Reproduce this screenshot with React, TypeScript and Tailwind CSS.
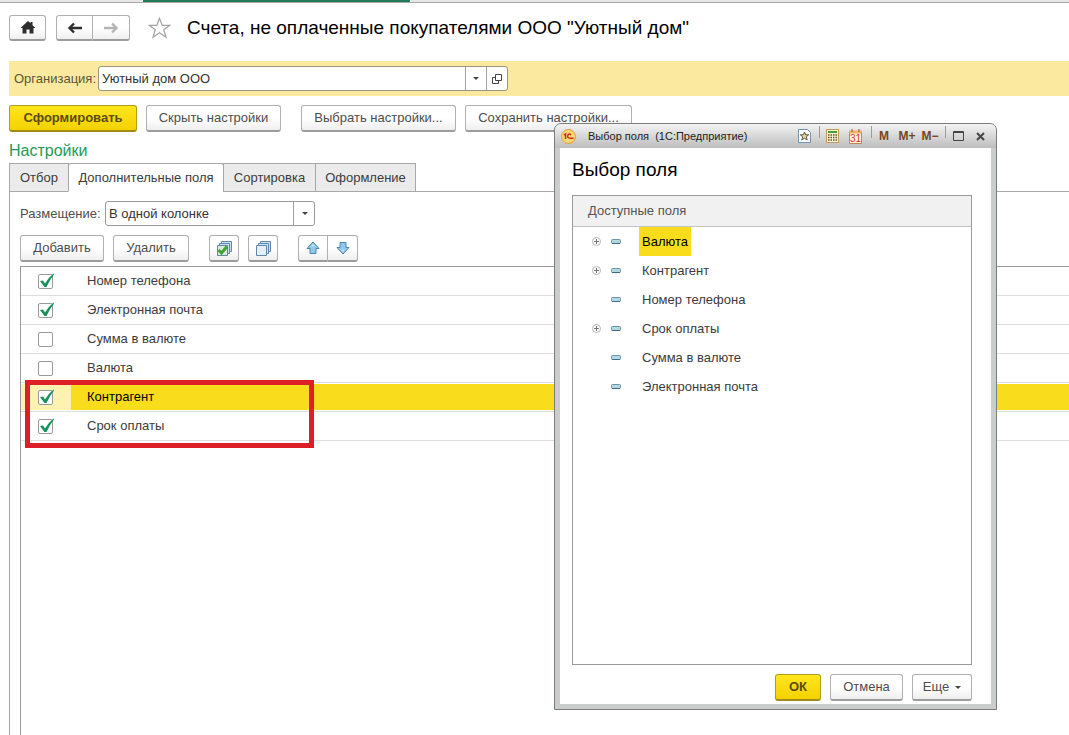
import { useState } from 'react';
import type { ReactNode } from 'react';

interface Field {
  id: string;
  title: string;
  checked: boolean;
}

interface TreeField {
  title: string;
  expandable: boolean;
}

const initialFields: Field[] = [
  { id: 'phone', title: 'Номер телефона', checked: true },
  { id: 'email', title: 'Электронная почта', checked: true },
  { id: 'sum', title: 'Сумма в валюте', checked: false },
  { id: 'currency', title: 'Валюта', checked: false },
  { id: 'contractor', title: 'Контрагент', checked: true },
  { id: 'due', title: 'Срок оплаты', checked: true },
];

const availableFields: TreeField[] = [
  { title: 'Валюта', expandable: true },
  { title: 'Контрагент', expandable: true },
  { title: 'Номер телефона', expandable: false },
  { title: 'Срок оплаты', expandable: true },
  { title: 'Сумма в валюте', expandable: false },
  { title: 'Электронная почта', expandable: false },
];

const tabs = [
  { title: 'Отбор', width: 'w-[60px]' },
  { title: 'Дополнительные поля', width: 'w-[156px]' },
  { title: 'Сортировка', width: 'w-[93px]' },
  { title: 'Оформление', width: 'w-[101px]' },
];

interface ButtonProps {
  children: ReactNode;
  className?: string;
  primary?: boolean;
  label?: string;
}

function Button({ children, className = '', primary = false, label }: ButtonProps) {
  const look = primary
    ? 'border-[#b39b1d] border-b-[#a08b18] bg-linear-to-b from-[#ffe61a] to-[#f3d200] font-bold text-[#5a4c0c]'
    : 'border-[#b0b0b0] border-b-[#9c9c9c] bg-linear-to-b from-white from-50% to-[#efefef] text-[#4d4d4d]';
  return (
    <button
      type="button"
      aria-label={label}
      className={`flex h-[27px] shrink-0 items-center justify-center rounded-[3px] border border-b-2 whitespace-nowrap ${look} ${className}`}
    >
      {children}
    </button>
  );
}

function Caret() {
  return (
    <svg width="6" height="3" viewBox="0 0 6 3" fill="#444" aria-hidden="true">
      <path d="M0 0h6L3 3z" />
    </svg>
  );
}

function ArrowIcon({ right = false }: { right?: boolean }) {
  return (
    <svg width="16" height="12" viewBox="0 0 16 12" fill="none" stroke={right ? '#b4b4b4' : '#2e2e2e'} strokeWidth="2.400" aria-hidden="true">
      {right ? <path d="M1 6h12M9 1.500l4.500 4.500L9 10.500" /> : <path d="M15 6H3M7 1.500L2.500 6L7 10.500" />}
    </svg>
  );
}

function SheetsIcon({ checked = false }: { checked?: boolean }) {
  return (
    <svg width="17" height="17" viewBox="0 0 17 17" aria-hidden="true">
      <g fill="#cfe0ee" stroke="#5f87ab">
        <path d="M5.500 1.500h10v10h-10z" />
        <path d="M3.500 3.500h10v10h-10z" />
        <path d="M1.500 5.500h10v10h-10z" fill={checked ? '#dcebdc' : '#e6eff8'} />
      </g>
      {checked && <path d="M2.500 10L5.500 13L11 6.500" fill="none" stroke="#3fa535" strokeWidth="3" />}
    </svg>
  );
}

function MoveIcon({ down = false }: { down?: boolean }) {
  return (
    <svg width="14" height="14" viewBox="0 0 14 14" className={down ? 'rotate-180' : ''} aria-hidden="true">
      <path d="M7 1L13 7.500H10V12.500H4V7.500H1z" fill="#8fc8e8" stroke="#4a87ae" strokeLinejoin="round" />
      <path d="M7 3L9 5.500H5z" fill="#c4e4f6" />
    </svg>
  );
}

function Header() {
  return (
    <header className="flex h-[26px] items-center pl-[9px]">
      <Button className="w-[37px] !h-[26px]" label="Начальная страница">
        <svg width="16" height="13" viewBox="0 0 16 13" fill="#2e2e2e" aria-hidden="true">
          <path d="M8 0L10.500 2.300V1H12.500V4.200L15.500 7H13.500V12.500H9.500V8.500H6.500V12.500H2.500V7H.5z" />
        </svg>
      </Button>
      <div className="ml-[10px] flex">
        <Button className="w-[37px] !h-[26px] rounded-r-none" label="Назад">
          <ArrowIcon />
        </Button>
        <Button className="w-[37px] !h-[26px] rounded-l-none border-l-0" label="Вперед">
          <ArrowIcon right />
        </Button>
      </div>
      <button type="button" aria-label="В избранное" className="ml-[18px]">
        <svg width="23" height="22" viewBox="0 0 23 22" fill="#fff" stroke="#a3a3a3" strokeWidth="1.200" aria-hidden="true">
          <path d="M11.500 1.200L14.200 8.300H21.800L15.700 12.800L18 20.200L11.500 15.700L5 20.200L7.300 12.800L1.200 8.300H8.800z" />
        </svg>
      </button>
      <h1 className="ml-4 text-[19px] whitespace-nowrap text-black">Счета, не оплаченные покупателями ООО "Уютный дом"</h1>
    </header>
  );
}

function OrganizationBar() {
  return (
    <div className="mt-5 ml-[9px] flex h-[35px] items-center bg-[#fbe9a0] pl-[5px]">
      <label htmlFor="organization" className="w-[84px] shrink-0 text-[#5e5535]">
        Организация:
      </label>
      <div className="flex h-[25px] w-[410px] rounded-[3px] border border-[#9c9680] bg-white">
        <input id="organization" type="text" defaultValue="Уютный дом ООО" className="min-w-0 flex-1 bg-transparent pl-[3px] text-[#333] outline-none" />
        <button type="button" aria-label="Выбрать из списка" className="flex w-[21px] items-center justify-center border-l border-[#a0a0a0]">
          <Caret />
        </button>
        <button type="button" aria-label="Открыть" className="flex w-[21px] items-center justify-center border-l border-[#a0a0a0]">
          <svg width="10" height="10" viewBox="0 0 10 10" fill="none" stroke="#444" aria-hidden="true">
            <path d="M3.500.5h6v6h-6zM3.500 3.500h-3v6h6v-3" />
          </svg>
        </button>
      </div>
    </div>
  );
}

function FieldsTable() {
  const [fields, setFields] = useState(initialFields);

  const toggle = (id: string) => {
    setFields(fields.map((f) => (f.id === id ? { ...f, checked: !f.checked } : f)));
  };

  return (
    <div className="relative mt-1 ml-[10px] flex-1 border-t border-l border-[#9a9a9a]">
      <table className="w-full border-collapse">
        <tbody>
          {fields.map((field) => {
            const selected = field.id === 'contractor';
            return (
              <tr key={field.id} className="border-b border-[#dedede]">
                <td className="w-[50px] p-0">
                  <div className={`my-px flex h-[26px] items-center pl-[17px] ${selected ? 'bg-[#fdf2b0]' : ''}`}>
                    <span className="relative block size-[15px]">
                      <input
                        id={field.id}
                        type="checkbox"
                        checked={field.checked}
                        onChange={() => toggle(field.id)}
                        className="block size-[15px] appearance-none rounded-[2px] border border-[#9a9a9a] bg-white"
                      />
                      {field.checked && (
                        <svg width="17" height="16" viewBox="0 0 17 16" className="pointer-events-none absolute -top-px left-0" aria-hidden="true">
                          <path d="M2 8L5 7.500L7 10.500Q10.500 4.500 15.500 .5L16 1.500Q11.500 7 8.500 14H6.500z" fill="#14935a" />
                        </svg>
                      )}
                    </span>
                  </div>
                </td>
                <td className="p-0">
                  <label
                    htmlFor={field.id}
                    className={`my-px flex h-[26px] items-center pl-4 ${selected ? 'bg-[#f9dc1c] text-black' : 'text-[#3c3c3c]'}`}
                  >
                    {field.title}
                  </label>
                </td>
              </tr>
            );
          })}
        </tbody>
      </table>
      {/* Highlight frame over the newly added fields */}
      <div className="pointer-events-none absolute top-[113px] left-1 h-[68px] w-[289px] border-[5px] border-[#dd2027]" />
    </div>
  );
}

function Settings() {
  const [active, setActive] = useState(1);
  return (
    <section className="ml-[9px] flex flex-1 flex-col">
      <h2 className="mt-[7px] text-base leading-6 text-[#1d9b56]">Настройки</h2>
      <div role="tablist" className="relative z-10 -mb-px flex">
        {tabs.map((tab, i) => (
          <button
            key={tab.title}
            type="button"
            role="tab"
            aria-selected={i === active}
            onClick={() => setActive(i)}
            className={`h-[29px] shrink-0 border border-[#a8a8a8] whitespace-nowrap text-[#3c3c3c] ${tab.width} ${i > 0 ? '-ml-px' : ''} ${
              i === active ? 'rounded-t-[3px] border-b-white bg-white' : 'bg-[#ebebeb]'
            }`}
          >
            {tab.title}
          </button>
        ))}
      </div>
      <div className="flex flex-1 flex-col border-t border-l border-[#a8a8a8]">
        <div className="mt-[9px] ml-[10px] flex h-[25px] items-center">
          <label htmlFor="placement" className="w-[85px] text-[#4d4d4d]">
            Размещение:
          </label>
          <div className="relative h-[25px] w-[210px]">
            <select id="placement" className="h-full w-full appearance-none rounded-[3px] border border-[#9a9a9a] bg-white pl-[3px] text-[#333]">
              <option>В одной колонке</option>
              <option>В разных колонках</option>
            </select>
            <span className="pointer-events-none absolute inset-y-0 right-0 flex w-[22px] items-center justify-center border-l border-[#a0a0a0]">
              <Caret />
            </span>
          </div>
        </div>
        <div className="mt-[9px] ml-[10px] flex">
          <Button className="w-[84px]">Добавить</Button>
          <Button className="ml-[9px] w-[76px]">Удалить</Button>
          <Button className="ml-5 w-[30px]" label="Включить все">
            <SheetsIcon checked />
          </Button>
          <Button className="ml-[9px] w-[30px]" label="Выключить все">
            <SheetsIcon />
          </Button>
          <Button className="ml-5 w-[30px] rounded-r-none" label="Вверх">
            <MoveIcon />
          </Button>
          <Button className="w-[30px] rounded-l-none border-l-0" label="Вниз">
            <MoveIcon down />
          </Button>
        </div>
        <FieldsTable />
      </div>
    </section>
  );
}

function TitleBar() {
  return (
    <div className="flex h-[24px] items-center bg-linear-to-b from-[#f4f4f4] via-[#d8d8d8] to-[#bdbdbd] pl-[6px] text-[11px]">
      <svg width="15" height="15" viewBox="0 0 15 15" aria-hidden="true">
        <circle cx="7.500" cy="7.500" r="7" fill="#fbd774" stroke="#e8973c" />
        <path d="M3 6L4.500 5V10M10 6Q9 4.800 7.800 5.200Q6.300 6 6.700 8Q7.300 9.500 12.500 9.300" fill="none" stroke="#d3281c" strokeWidth="1.500" />
      </svg>
      <span className="ml-3 flex-1 whitespace-pre text-[#222]">{'Выбор поля  (1С:Предприятие)'}</span>
      <div className="flex h-full items-center">
        <button type="button" aria-label="Добавить в избранное" className="mr-2">
          <svg width="13" height="14" viewBox="0 0 13 14" aria-hidden="true">
            <path d="M.5.5h9l3 3v10h-12z" fill="#fff" stroke="#7693ad" />
            <path d="M6.500 3L7.600 5.800H10.700L8.300 7.800L9.200 11L6.500 9.200L3.800 11L4.700 7.800L2.300 5.800H5.400z" fill="#e7d7a5" stroke="#5c5641" />
          </svg>
        </button>
        <span className="mb-2 h-3 w-px bg-[#9c9c9c]" />
        <button type="button" aria-label="Калькулятор" className="ml-[6px]">
          <svg width="13" height="14" viewBox="0 0 13 14" aria-hidden="true">
            <path d="M.5.5h12v13H.5z" fill="#fdf3cf" stroke="#c09a5a" />
            <path d="M2 2h9v2H2z" fill="#4d9a3e" />
            <path d="M2 6h9M2 8.500h9M2 11h9" stroke="#6c4c2c" strokeWidth="1.500" strokeDasharray="1.500 1" />
          </svg>
        </button>
        <button type="button" aria-label="Календарь" className="ml-[10px] mr-[9px]">
          <svg width="13" height="15" viewBox="0 0 13 15" aria-hidden="true">
            <path d="M.5 2.500h12v12H.5z" fill="#fff6e0" stroke="#c08746" />
            <path d="M.5 1.500h12v3H.5z" fill="#f2b164" />
            <path d="M3 0v3M10 0v3" stroke="#8f5a24" />
            <text x="6.500" y="13" textAnchor="middle" fontSize="10" fontFamily="Liberation Sans, sans-serif" fill="#d8341f">
              31
            </text>
          </svg>
        </button>
        <span className="mb-2 h-3 w-px bg-[#9c9c9c]" />
        <button type="button" className="ml-1 w-4 text-xs font-bold text-[#74481f]">
          M
        </button>
        <button type="button" className="ml-[5px] w-5 text-xs font-bold text-[#74481f]">
          M+
        </button>
        <button type="button" className="ml-[3px] w-5 text-xs font-bold text-[#74481f]">
          M−
        </button>
        <span className="mb-2 ml-[5px] h-3 w-px bg-[#9c9c9c]" />
        <button type="button" aria-label="Развернуть" className="ml-[7px]">
          <svg width="11" height="10" viewBox="0 0 11 10" fill="none" stroke="#444" aria-hidden="true">
            <path d="M.5.5h10v9H.5zM.5 1.500h10" />
          </svg>
        </button>
        <button type="button" aria-label="Закрыть" className="mr-[11px] ml-3">
          <svg width="9" height="9" viewBox="0 0 9 9" stroke="#444" strokeWidth="2" aria-hidden="true">
            <path d="M1 1L8 8M8 1L1 8" />
          </svg>
        </button>
      </div>
    </div>
  );
}

function FieldDialog() {
  return (
    <div
      role="dialog"
      aria-label="Выбор поля"
      className="absolute top-[123px] left-[554px] z-20 w-[443px] overflow-hidden rounded-t-[7px] border border-[#7c7c7c] bg-[#cbcccc]"
    >
      <TitleBar />
      <div className="mx-[5px] mb-[5px] bg-white pr-[19px] pb-[3px] pl-3">
        <h2 className="pt-[10px] text-[19px] leading-6 text-black">Выбор поля</h2>
        <div className="mt-[13px] h-[470px] border border-[#9a9a9a]">
          <div className="flex h-[31px] items-center border-b border-[#c4c4c4] bg-[#f1f1f1] pl-[15px] text-[#555]">Доступные поля</div>
          <ul>
            {availableFields.map((field, i) => (
              <li key={field.title} className="flex h-[29px] items-center pl-[19px]">
                <span className="w-[19px]">
                  {field.expandable && (
                    <button type="button" aria-label={`Развернуть ${field.title}`} className="block">
                      <svg width="9" height="9" viewBox="0 0 9 9" fill="none" aria-hidden="true">
                        <circle cx="4.500" cy="4.500" r="4" stroke="#b4b4b4" />
                        <path d="M2 4.500h5M4.500 2v5" stroke="#777" />
                      </svg>
                    </button>
                  )}
                </span>
                <svg width="10" height="5" viewBox="0 0 10 5" aria-hidden="true">
                  <rect x=".5" y=".5" width="9" height="4" rx="1" fill="#b5d8e0" stroke="#6b94a8" />
                  <path d="M1 4.500h8" stroke="#3f6c84" />
                </svg>
                <span className={`ml-[18px] flex h-full items-center px-[3px] ${i === 0 ? 'bg-[#f9dc1c] text-black' : 'text-[#3c3c3c]'}`}>
                  {field.title}
                </span>
              </li>
            ))}
          </ul>
        </div>
        <div className="mt-[9px] flex justify-end gap-[9px]">
          <Button primary className="w-[46px]">
            ОК
          </Button>
          <Button className="w-[73px]">Отмена</Button>
          <Button className="w-[60px] gap-[6px]">
            Еще <Caret />
          </Button>
        </div>
      </div>
    </div>
  );
}

export default function App() {
  return (
    <div className="relative flex min-h-screen flex-col overflow-hidden bg-white font-['Liberation_Sans',Arial,sans-serif] text-[13px]">
      <div className="flex h-[3px] border-b border-[#a8a8a8] bg-[#e6e6e6]">
        <div className="ml-[142px] h-[2px] w-[269px] border-x border-white bg-[#1f7a58]" />
      </div>
      <div className="mt-3">
        <Header />
      </div>
      <OrganizationBar />
      <div className="mt-[9px] ml-[9px] flex">
        <Button primary className="w-[128px]">
          Сформировать
        </Button>
        <Button className="ml-[9px] w-[135px]">Скрыть настройки</Button>
        <Button className="ml-5 w-[155px]">Выбрать настройки...</Button>
        <Button className="ml-[9px] w-[167px]">Сохранить настройки...</Button>
      </div>
      <Settings />
      <FieldDialog />
    </div>
  );
}
